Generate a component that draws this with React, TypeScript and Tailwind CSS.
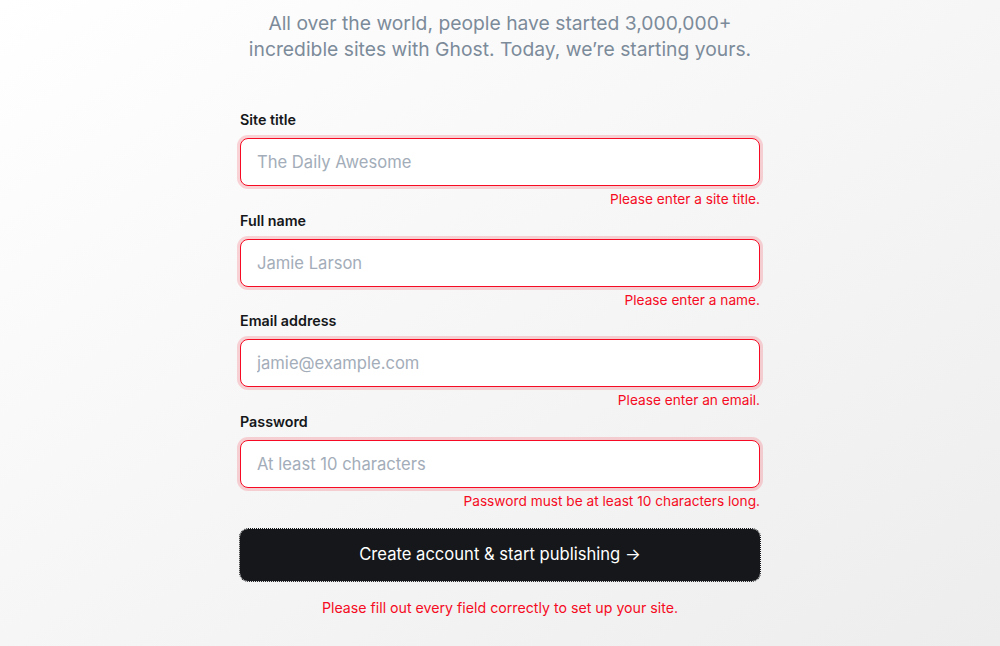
import React from "react";

const fields = [
  { label: "Site title", placeholder: "The Daily Awesome", error: "Please enter a site title.", type: "text" },
  { label: "Full name", placeholder: "Jamie Larson", error: "Please enter a name.", type: "text" },
  { label: "Email address", placeholder: "jamie@example.com", error: "Please enter an email.", type: "email" },
  { label: "Password", placeholder: "At least 10 characters", error: "Password must be at least 10 characters long.", type: "password" },
];

export default function App() {
  return (
    <div
      className="min-h-[646px] w-full bg-linear-to-br from-white to-[#ededed] flex flex-col items-center pt-[10px]"
      style={{ fontFamily: "Inter, 'Noto Sans', sans-serif" }}
    >
      <p className="text-center text-[19.3px] leading-[26px] text-[#7c8b9a] w-[560px]">
        All over the world, people have started 3,000,000+
        <br />
        incredible sites with Ghost. Today, we’re starting yours.
      </p>
      <form className="w-[520px] mt-[47px] flex flex-col" onSubmit={(e) => e.preventDefault()}>
        {fields.map((f) => (
          <div key={f.label} className="flex flex-col">
            <label className="text-[14.3px] leading-[21px] font-semibold text-[#15171a] mb-2">{f.label}</label>
            <input
              type={f.type}
              placeholder={f.placeholder}
              className="h-[48px] w-full rounded-lg border border-[#f50b23] bg-white px-4 text-[16.6px] text-[#15171a] placeholder:text-[#a3adb9] outline-none shadow-[0_0_0_3px_rgba(245,11,35,0.17)]"
            />
            <p className="mt-1 text-right text-[13.7px] leading-[19.67px] text-[#f50b23]">{f.error}</p>
          </div>
        ))}
        <button
          type="submit"
          className="mt-[17px] h-[52px] w-full rounded-lg bg-[#15171a] text-white text-[16.6px] outline-1 outline-dotted outline-[#15171a]"
        >
          Create account &amp; start publishing →
        </button>
        <p className="mt-[17px] text-center text-[14.2px] leading-[20px] text-[#f50b23]">
          Please fill out every field correctly to set up your site.
        </p>
      </form>
    </div>
  );
}
